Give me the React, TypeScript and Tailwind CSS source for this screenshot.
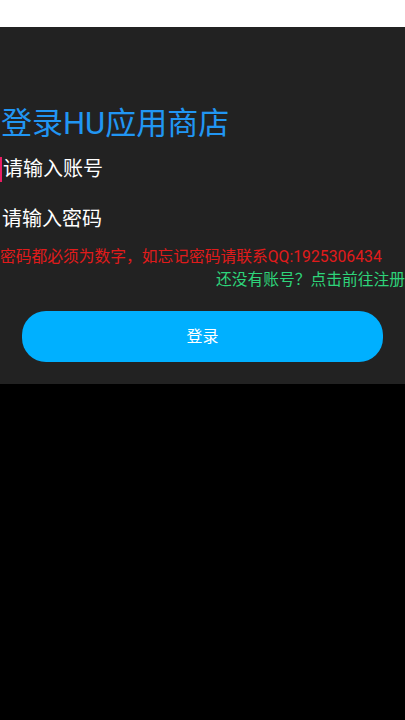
export default function App() {
  const font = { fontFamily: 'Roboto, "Noto Sans CJK SC", sans-serif' };
  return (
    <div className="w-[405px] h-[720px] bg-black overflow-hidden" style={font}>
      <div className="h-[27px] bg-white" />
      <div className="h-[357px] bg-[#222222] flex flex-col">
        <h1 className="mt-[76px] h-[41px] leading-[41px] text-[31px] text-[#2196f3] pl-[1px] whitespace-nowrap">
          登录HU应用商店
        </h1>
        <div className="h-[50px] flex items-center">
          <span className="inline-block w-[2px] h-[25px] bg-[#e91e63]" />
          <span className="text-[20px] text-white ml-[1px]">请输入账号</span>
        </div>
        <div className="h-[50px] flex items-center">
          <span className="text-[20px] text-white pl-[2px]">请输入密码</span>
        </div>
        <p className="mt-[2px] h-[22px] leading-[22px] text-[15.75px] text-[#e01b1b] whitespace-nowrap">
          密码都必须为数字，如忘记密码请联系QQ:1925306434
        </p>
        <p className="h-[23px] leading-[23px] text-[15.75px] text-[#2ed47a] text-right whitespace-nowrap">
          还没有账号？点击前往注册
        </p>
        <button className="mt-[20px] mx-[22px] h-[51px] rounded-[24px] bg-[#00b0ff] text-white text-[16px]">
          登录
        </button>
      </div>
    </div>
  );
}
